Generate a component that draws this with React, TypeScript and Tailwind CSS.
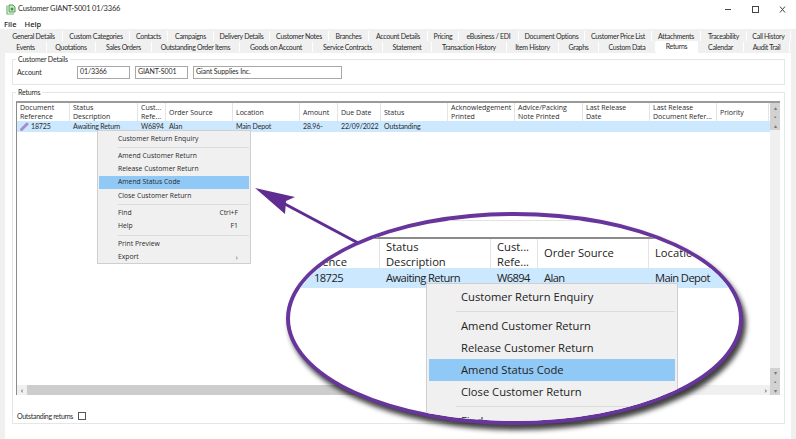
import React from 'react';

const topTabs: [string, number][] = [
  ['General Details', 58], ['Custom Categories', 67], ['Contacts', 38], ['Campaigns', 46], ['Delivery Details', 56],
  ['Customer Notes', 59], ['Branches', 40], ['Account Details', 59], ['Pricing', 31], ['eBusiness / EDI', 60],
  ['Document Options', 66], ['Customer Price List', 67], ['Attachments', 49], ['Traceability', 46], ['Call History', 44],
];

const bottomTabs: [string, number][] = [
  ['Events', 42], ['Quotations', 49], ['Sales Orders', 56], ['Outstanding Order Items', 88], ['Goods on Account', 73],
  ['Service Contracts', 70], ['Statement', 49], ['Transaction History', 75], ['Item History', 52], ['Graphs', 40],
  ['Custom Data', 57], ['Returns', 42], ['Calendar', 46], ['Audit Trail', 46],
];

const columns: [string, string, number][] = [
  ['Document', 'Reference', 53], ['Status', 'Description', 68], ['Cust...', 'Refe...', 28], ['Order Source', '', 67],
  ['Location', '', 67], ['Amount', '', 38], ['Due Date', '', 43], ['Status', '', 67], ['Acknowledgement', 'Printed', 67],
  ['Advice/Packing', 'Note Printed', 68], ['Last Release', 'Date', 67], ['Last Release', 'Document Refer...', 67], ['Priority', '', 52],
];

const rowCells: [string, number][] = [
  ['Awaiting Return', 68], ['W6894', 28], ['Alan', 67], ['Main Depot', 67], ['28.96-', 38], ['22/09/2022', 43], ['Outstanding', 67],
];

function TabRow({ tabs, className }: { tabs: [string, number][]; className: string }) {
  return (
    <div className={`flex pl-[5px] ${className}`}>
      {tabs.map(([label, w]) => {
        const active = label === 'Returns';
        return (
          <div
            key={label}
            style={{ width: w }}
            className={`flex justify-center border-r border-white text-[7px] leading-[10px] tracking-[-0.3px] whitespace-nowrap [font-family:Lato,sans-serif] ${active ? '-mt-[1px] h-[12px] bg-white' : ''}`}
          >
            {label}
          </div>
        );
      })}
    </div>
  );
}

function GroupBox({ title, className, children }: { title: string; className: string; children: React.ReactNode }) {
  return (
    <div className={`relative border border-[#e6e6e6] ${className}`}>
      <span className="absolute -top-[6px] left-[3px] bg-white px-[2px] text-[7px] leading-[11px] tracking-[-0.2px] [font-family:Lato,sans-serif]">{title}</span>
      {children}
    </div>
  );
}

function Field({ width, children }: { width: string; children: string }) {
  return <div className={`h-[13px] border border-[#a8a8a8] pl-[2px] text-[7px] leading-[9px] tracking-[-0.1px] [font-family:Lato,sans-serif] ${width}`}>{children}</div>;
}

function ScrollBtn({ glyph }: { glyph: string }) {
  return <div className="flex h-[9px] items-center justify-center bg-[#d2d2d2] text-[6px] leading-none text-[#777]">{glyph}</div>;
}

function MenuRow({ label, right, hi, arrow }: { label: string; right?: string; hi?: boolean; arrow?: boolean }) {
  return (
    <div className={`flex h-[13.3px] items-center justify-between pl-[19px] pr-[11px] text-[6.8px] ${hi ? 'bg-[#90c8f6]' : ''}`}>
      <span>{label}</span>
      {right && <span>{right}</span>}
      {arrow && <span className="text-[8px] text-[#666]">›</span>}
    </div>
  );
}

function MenuSep() {
  return <div className="my-[1.5px] ml-[19px] h-px bg-[#dcdcdc]" />;
}

function LensRow({ label, hi }: { label: string; hi?: boolean }) {
  return (
    <div className={`ml-[2px] mr-[2px] flex h-[22px] items-center pl-[32px] text-[11.2px] ${hi ? 'bg-[#90c8f6]' : ''}`}>{label}</div>
  );
}

export default function App() {
  return (
    <div className="relative flex h-[439px] w-[796px] flex-col overflow-hidden bg-white text-[#2a2a2a] [font-family:'Open_Sans','Noto_Sans',sans-serif]">
      {/* title bar */}
      <div className="flex h-[18px] items-center pl-[6px]">
        <svg width="11" height="11" viewBox="0 0 11 11" className="mr-[1px]" fill="none">
          <path d="M1 1.5V10H8" stroke="#6fb56f" strokeWidth="1.2" />
          <path d="M3 1h4l2 2v5H3z" fill="#cfe8c8" stroke="#4c9a54" strokeWidth="1" />
          <circle cx="6" cy="5" r="1.5" fill="#3f9150" />
        </svg>
        <span className="text-[7.5px] tracking-[-0.2px] [font-family:Lato,sans-serif]">Customer GIANT-S001 01/3366</span>
        <div className="ml-auto flex items-center">
          <svg width="70" height="10" viewBox="0 0 70 10" className="mr-[10px]" fill="none" stroke="#444" strokeWidth="1">
            <path d="M9 5.5h6" />
            <rect x="36.5" y="2.5" width="6" height="6" />
            <path d="M64 2.5l5 6M69 2.5l-5 6" />
          </svg>
        </div>
      </div>

      {/* menu */}
      <div className="flex h-[11px] items-center gap-[8px] pl-[4px] pt-[2px] text-[7.5px] font-semibold">
        <span>File</span>
        <span>Help</span>
      </div>

      {/* tabs */}
      <div className="flex h-[24px] flex-col bg-[#f0f0f0] pt-[2px]">
        <TabRow tabs={topTabs} className="h-[10px]" />
        <TabRow tabs={bottomTabs} className="mt-[1px] h-[10px]" />
      </div>

      {/* tab page */}
      <div className="flex flex-1 bg-[#f0f0f0] pl-[5px] pr-[5px]">
        <div className="flex-1 bg-white pl-[7px] pr-[6px] pt-[6px]">
          <GroupBox title="Customer Details" className="h-[26px]">
            <div className="flex items-center pl-[4px] pt-[6px]">
              <span className="w-[60px] text-[7px] tracking-[-0.1px] [font-family:Lato,sans-serif]">Account</span>
              <Field width="w-[53px]">01/3366</Field>
              <Field width="ml-[5px] w-[53px]">GIANT-S001</Field>
              <Field width="ml-[5px] w-[149px]">Giant Supplies Inc.</Field>
            </div>
          </GroupBox>

          <GroupBox title="Returns" className="mt-[7px] h-[332px]">
            <div className="ml-[3px] mr-[4px] mt-[8px] flex h-[294px] border-l border-t-2 border-l-[#8c8c8c] border-t-[#9a9a9a]">
              <div className="flex w-[753px] flex-col">
                <div className="flex h-[18px]">
                  {columns.map(([a, b, w], i) => (
                    <div key={i} style={{ width: w }} className="flex shrink-0 flex-col justify-center border-r border-[#e4e4e4] pl-[3px] text-[7px] leading-[9px] whitespace-nowrap">
                      <span>{a}</span>
                      {b && <span>{b}</span>}
                    </div>
                  ))}
                </div>
                <div className="flex h-[11px] items-center bg-[#cce8ff] text-[7px] tracking-[-0.15px] [font-family:Lato,sans-serif]">
                  <div className="flex w-[53px] items-center pl-[3px]">
                    <svg width="9" height="9" viewBox="0 0 9 9" className="mr-[2px]">
                      <path d="M1.5 7.5L7 2" stroke="#a98ccc" strokeWidth="3" strokeLinecap="round" />
                    </svg>
                    <span>18725</span>
                  </div>
                  {rowCells.map(([t, w], i) => (
                    <div key={i} style={{ width: w }} className="shrink-0 pl-[3px] whitespace-nowrap">{t}</div>
                  ))}
                </div>
                <div className="flex-1" />
                <div className="flex h-[10px] items-center bg-[#f0f0f0]">
                  <span className="w-[10px] text-center text-[8px] leading-none">‹</span>
                  <div className="h-full w-[470px] bg-[#cdcdcd]" />
                  <span className="ml-auto pr-[3px] text-[8px] leading-none">›</span>
                </div>
              </div>
              <div className="flex w-[10px] flex-col bg-[#f0f0f0]">
                <ScrollBtn glyph="▴" />
                <ScrollBtn glyph="▪" />
                <ScrollBtn glyph="▴" />
                <div className="flex-1" />
                <ScrollBtn glyph="▾" />
                <ScrollBtn glyph="▪" />
                <ScrollBtn glyph="▾" />
              </div>
            </div>
            <div className="mt-[16px] flex items-center pl-[4px] text-[7px] tracking-[-0.3px] [font-family:Lato,sans-serif]">
              <span>Outstanding returns</span>
              <div className="ml-[5px] h-[8px] w-[8px] border border-[#555]" />
            </div>
          </GroupBox>
        </div>
      </div>

      {/* context menu */}
      <div className="absolute left-[97px] top-[130px] h-[134px] w-[154px] border border-[#cfcfcf] bg-[#f0f0f0] px-px pt-[1px]">
        <MenuRow label="Customer Return Enquiry" />
        <MenuSep />
        <MenuRow label="Amend Customer Return" />
        <MenuRow label="Release Customer Return" />
        <MenuRow label="Amend Status Code" hi />
        <MenuRow label="Close Customer Return" />
        <MenuSep />
        <MenuRow label="Find" right="Ctrl+F" />
        <MenuRow label="Help" right="F1" />
        <MenuSep />
        <MenuRow label="Print Preview" />
        <MenuRow label="Export" arrow />
      </div>

      {/* arrow pointing at the menu item */}
      <svg className="absolute left-[250px] top-[180px]" width="120" height="70" viewBox="250 180 120 70">
        <path d="M283 203L360 244" stroke="#5f2d91" strokeWidth="3" fill="none" />
        <path d="M255 188L295 197L286 201L285 214Z" fill="#5f2d91" />
      </svg>

      {/* magnified lens */}
      <div className="absolute left-[286px] top-[212px] h-[213px] w-[457px] overflow-hidden rounded-[50%] border-[4px] border-[#67359b] bg-white text-[#222] shadow-[3px_5px_5px_rgba(0,0,0,0.75)]">
        <div className="ml-[110px] mt-[4px] h-px w-[250px] bg-[#e2e2e2]" />
        <div className="mt-[16px] flex h-[31px] border-t-2 border-[#8a8a8a]">
          <div className="flex w-[90px] shrink-0 flex-col items-end justify-center border-r border-[#e4e4e4] pr-[32px] text-[11.2px] leading-[15px]">
            <span className="text-transparent">ent</span>
            <span>ence</span>
          </div>
          <div className="flex w-[111px] shrink-0 flex-col justify-center border-r border-[#e4e4e4] pl-[6px] text-[11.2px] leading-[15px]">
            <span>Status</span>
            <span>Description</span>
          </div>
          <div className="flex w-[47px] shrink-0 flex-col justify-center border-r border-[#e4e4e4] pl-[6px] text-[11.2px] leading-[15px]">
            <span>Cust...</span>
            <span>Refe...</span>
          </div>
          <div className="flex w-[111px] shrink-0 items-center border-r border-[#e4e4e4] pl-[6px] text-[11.2px]">Order Source</div>
          <div className="flex flex-1 items-center pl-[6px] text-[11.2px]">Location</div>
        </div>
        <div className="flex h-[20px] items-center bg-[#cce8ff] text-[11.2px] tracking-[-0.6px]">
          <div className="w-[90px] shrink-0 pl-[24px]">18725</div>
          <div className="w-[111px] shrink-0 pl-[6px]">Awaiting Return</div>
          <div className="w-[47px] shrink-0 pl-[6px]">W6894</div>
          <div className="w-[111px] shrink-0 pl-[6px]">Alan</div>
          <div className="flex-1 pl-[6px]">Main Depot</div>
        </div>
        <div className="absolute left-[136px] top-[67px] h-[150px] w-[252px] border border-[#cfcfcf] bg-[#f0f0f0] pt-[2px]">
          <LensRow label="Customer Return Enquiry" />
          <div className="ml-[29px] mr-[2px] my-[3px] h-px bg-[#dcdcdc]" />
          <LensRow label="Amend Customer Return" />
          <LensRow label="Release Customer Return" />
          <LensRow label="Amend Status Code" hi />
          <LensRow label="Close Customer Return" />
          <div className="ml-[29px] mr-[2px] my-[3px] h-px bg-[#dcdcdc]" />
          <LensRow label="Find" />
        </div>
      </div>
    </div>
  );
}
